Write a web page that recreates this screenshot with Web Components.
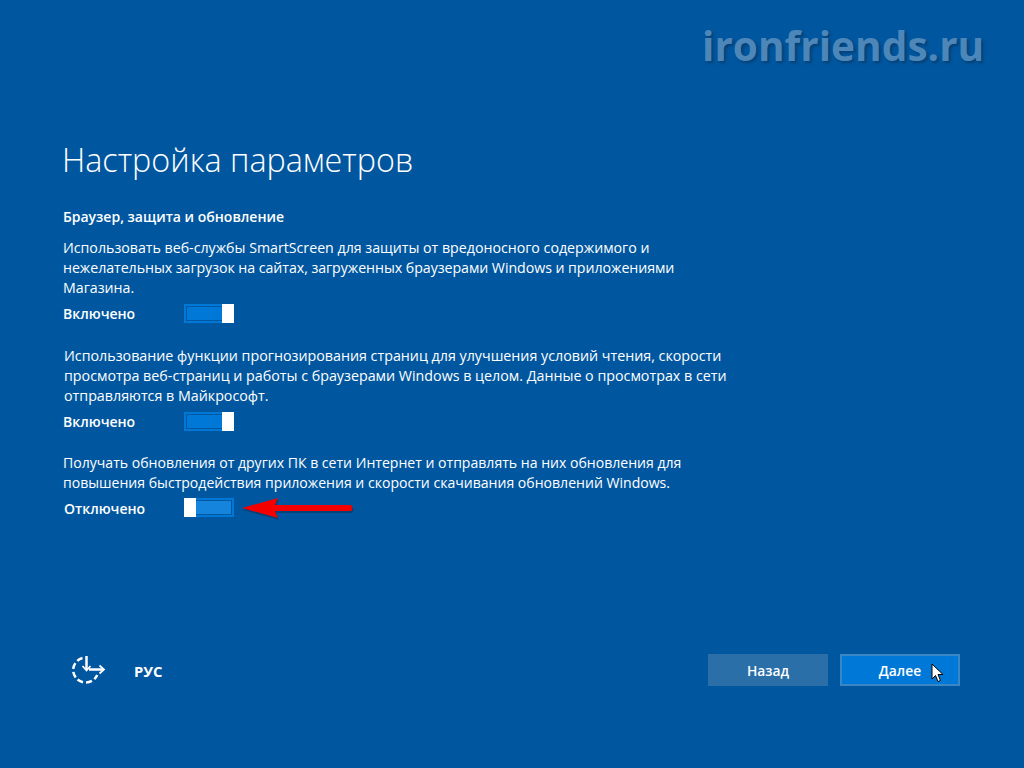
<!DOCTYPE html>
<html lang="ru">
<head>
<meta charset="utf-8">
<title>Настройка параметров</title>
<style>
    html, body { margin: 0; height: 100%; }
    body {
        background: #01579f;
        color: #fff;
        font-family: 'Open Sans', 'Noto Sans', sans-serif;
        overflow: hidden;
    }
</style>
</head>
<body>
<setup-page>
    <span slot="title">Настройка параметров</span>
    <span slot="subtitle">Браузер, защита и обновление</span>

    <setup-option label="Включено" on>Использовать веб-службы SmartScreen для защиты от вредоносного содержимого и<br><span style="letter-spacing:-.05px">нежелательных загрузок на сайтах, загруженных браузерами Windows и приложениями</span><br>Магазина.</setup-option>
    <setup-option label="Включено" on shift style="--text-size:14.27px">Использование функции прогнозирования страниц для улучшения условий чтения, скорости<br>просмотра веб-страниц и работы с браузерами Windows в целом. Данные о просмотрах в сети<br>отправляются в Майкрософт.</setup-option>
    <setup-option label="Отключено" arrow style="--text-size:14.07px">Получать обновления от других ПК в сети Интернет и отправлять на них обновления для<br>повышения быстродействия приложения и скорости скачивания обновлений Windows.</setup-option>

    <setup-footer slot="footer"></setup-footer>
</setup-page>

<script>
const pageTemplate = document.createElement('template')
pageTemplate.innerHTML = `
    <style>
        :host {
            display: flex;
            flex-direction: column;
            position: relative;
            height: 768px;
            box-sizing: border-box;
            padding: 137px 64px 82px 63px;
        }
        h1 {
            margin: 0 0 0 -1px;
            font-size: 32.3px;
            line-height: 44px;
            font-weight: 300;
            white-space: nowrap;
        }
        h2 {
            margin: 26px 0 11px;
            font-size: 14px;
            line-height: 20px;
            font-weight: 600;
        }
        .options { flex: 1; }
        .mark {
            position: absolute;
            top: 21px;
            left: 702px;
            font-family: 'Open Sans', sans-serif;
            font-size: 40.6px;
            line-height: 50px;
            font-weight: 700;
            color: #4d87ba;
            text-shadow: 2px 2px 3px #063f74;
            white-space: nowrap;
        }
    </style>
    <div class="mark">ironfriends.ru</div>
    <h1><slot name="title"></slot></h1>
    <h2><slot name="subtitle"></slot></h2>
    <div class="options"><slot></slot></div>
    <slot name="footer"></slot>
`

class SetupPage extends HTMLElement {
    constructor() {
        super()
        const shadow = this.attachShadow({ mode: 'open' })
        shadow.appendChild(pageTemplate.content.cloneNode(true))
    }
}

const optionTemplate = document.createElement('template')
optionTemplate.innerHTML = `
    <style>
        :host {
            display: block;
            margin-bottom: 22px;
            font-size: var(--text-size, 14.2px);
            line-height: 20px;
            white-space: nowrap;
        }
        :host([shift]) { margin-top: 23px; }
        :host([shift]) .text { padding-left: 1px; }
        .state {
            display: flex;
            align-items: center;
            margin-top: 5px;
            height: 20px;
            position: relative;
        }
        :host([arrow]) .state { margin-top: 4px; }
        .label { width: 121px; margin-top: 2px; font-size: 14px; font-weight: 600; }
        :host([arrow]) .label { margin-left: 1px; margin-top: 4px; width: 120px; }
        .arrow {
            position: absolute;
            left: 178px;
            top: -2px;
            display: none;
        }
        :host([arrow]) .arrow { display: block; }
    </style>
    <div class="text"><slot></slot></div>
    <div class="state">
        <span class="label"></span>
        <setup-toggle></setup-toggle>
        <svg class="arrow" width="116" height="28" viewBox="0 0 116 28">
            <path d="M1 13 L37 3 L34 10 L110 10 Q113 13 110 16 L34 16 L37 23 Z" fill="#0b2f57" opacity=".55" transform="translate(1 2)"/>
            <path d="M1 13 L37 3 L34 10 L110 10 Q113 13 110 16 L34 16 L37 23 Z" fill="#f50000"/>
        </svg>
    </div>
`

class SetupOption extends HTMLElement {
    constructor() {
        super()
        const shadow = this.attachShadow({ mode: 'open' })
        shadow.appendChild(optionTemplate.content.cloneNode(true))
    }

    connectedCallback() {
        this.shadowRoot.querySelector('.label').textContent = this.getAttribute('label')
        if (this.hasAttribute('on')) {
            this.shadowRoot.querySelector('setup-toggle').setAttribute('on', '')
        }
    }
}

const toggleTemplate = document.createElement('template')
toggleTemplate.innerHTML = `
    <style>
        :host {
            display: flex;
            flex-direction: row-reverse;
            width: 50px;
            height: 19px;
            background: #0078d7;
        }
        :host([on]) { flex-direction: row; }
        .track {
            flex: 1;
            margin: 2px 2px 2px 0;
            border: 1px solid #01579f;
            border-left: 0;
            background: #0078d7;
        }
        :host([on]) .track {
            margin: 2px 0 2px 2px;
            border: 1px solid #01579f;
            border-right: 0;
        }
        :host(:not([on])) .track { background: #1484dc; }
        .thumb { width: 12px; background: #fff; }
    </style>
    <div class="track"></div>
    <div class="thumb"></div>
`

class SetupToggle extends HTMLElement {
    constructor() {
        super()
        const shadow = this.attachShadow({ mode: 'open' })
        shadow.appendChild(toggleTemplate.content.cloneNode(true))
    }
}

const footerTemplate = document.createElement('template')
footerTemplate.innerHTML = `
    <style>
        :host {
            display: flex;
            align-items: center;
            height: 32px;
            gap: 12px;
            position: relative;
        }
        .ease { margin-left: 8px; display: block; }
        .lang {
            margin-left: 15px;
            margin-right: auto;
            padding-top: 2px;
            font-size: 14.8px;
            font-weight: 700;
        }
        button {
            width: 120px;
            height: 32px;
            box-sizing: border-box;
            border: 0;
            padding: 1px 0 0;
            color: #fff;
            font: 600 13.8px 'Open Sans', 'Noto Sans', sans-serif;
            background: #2a6fa8;
        }
        .next {
            background: #0078d7;
            border: 2px solid #3a87c6;
            padding: 1px 0 0;
        }
        .cursor {
            position: absolute;
            left: 868px;
            top: 9px;
        }
    </style>
    <svg class="ease" width="36" height="32" viewBox="0 0 36 32" fill="none" stroke="#fff" stroke-width="2.5">
        <path d="M11.5 4 A12.5 12.5 0 1 0 26.2 21" stroke-dasharray="6 3"/>
        <path d="M15.5 2 V16"/>
        <path d="M11.5 12 L15.5 16.5 L19.5 12" stroke-width="1.7"/>
        <path d="M18 15.5 H32"/>
        <path d="M28.5 11.5 L33 15.5 L28.5 19.5" stroke-width="1.7"/>
    </svg>
    <span class="lang">РУС</span>
    <button>Назад</button>
    <button class="next">Далее</button>
    <svg class="cursor" width="14" height="20" viewBox="0 0 14 20">
        <path d="M1 1 V16 L4.5 12.5 L7 18.5 L9.5 17.5 L7 11.5 H12 Z" fill="#fff" stroke="#000" stroke-width="1"/>
    </svg>
`

class SetupFooter extends HTMLElement {
    constructor() {
        super()
        const shadow = this.attachShadow({ mode: 'open' })
        shadow.appendChild(footerTemplate.content.cloneNode(true))
    }
}

window.customElements.define('setup-toggle', SetupToggle)
window.customElements.define('setup-option', SetupOption)
window.customElements.define('setup-footer', SetupFooter)
window.customElements.define('setup-page', SetupPage)
</script>
</body>
</html>
